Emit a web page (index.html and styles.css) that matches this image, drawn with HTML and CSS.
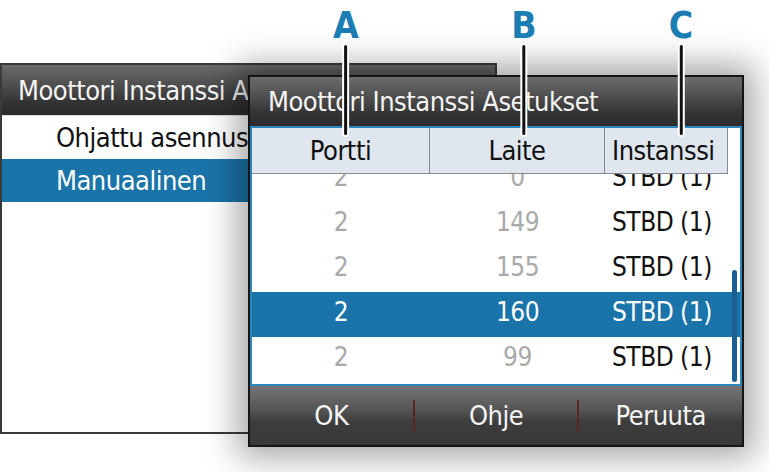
FILE: index.html
```
<!DOCTYPE html>
<html>
<head>
    <title>Moottori Instanssi Asetukset</title>
    <link rel="stylesheet" href="styles.css">
</head>
<body>
    <div class="desk">
        <div class="window back">
            <div class="titlebar">Moottori Instanssi Asetukset</div>
            <ul class="menu">
                <li>Ohjattu asennus</li>
                <li class="selected">Manuaalinen</li>
            </ul>
        </div>

        <div class="window dialog">
            <div class="titlebar">Moottori Instanssi Asetukset</div>
            <div class="table">
                <div class="thead">
                    <div class="cell">Portti</div>
                    <div class="cell">Laite</div>
                    <div class="cell">Instanssi</div>
                </div>
                <div class="tbody">
                    <div class="rows">
                        <div class="row"><span>2</span><span>0</span><span>STBD (1)</span></div>
                        <div class="row"><span>2</span><span>149</span><span>STBD (1)</span></div>
                        <div class="row"><span>2</span><span>155</span><span>STBD (1)</span></div>
                        <div class="row selected"><span>2</span><span>160</span><span>STBD (1)</span></div>
                        <div class="row"><span>2</span><span>99</span><span>STBD (1)</span></div>
                    </div>
                    <div class="scrollbar"></div>
                </div>
            </div>
            <div class="buttons">
                <div class="btn">OK</div>
                <div class="btn">Ohje</div>
                <div class="btn">Peruuta</div>
            </div>
        </div>

        <!-- callouts -->
        <div class="marker marker-a"><span>A</span><div class="line"></div></div>
        <div class="marker marker-b"><span>B</span><div class="line"></div></div>
        <div class="marker marker-c"><span>C</span><div class="line"></div></div>
    </div>
</body>
</html>
```

FILE: styles.css
```
body {
    margin: 0;
    background-color: #ffffff;
    font-family: "DejaVu Sans Condensed", "Liberation Sans", sans-serif;
    overflow: hidden;
}

.desk {
    position: relative;
    width: 769px;
    height: 472px;
}

.window {
    position: absolute;
    box-sizing: border-box;
    display: flex;
    flex-direction: column;
    overflow: hidden;
}

.titlebar {
    color: #f4f4f4;
    font-size: 27px;
    letter-spacing: -0.5px;
    white-space: nowrap;
    display: flex;
    align-items: center;
    background: linear-gradient(#6c6c6c, #4a4a4a 45%, #333333 75%, #2b2b2b);
}

/* back window */
.back {
    left: 0;
    top: 63px;
    width: 497px;
    height: 371px;
    background-color: #ffffff;
    border: 2px solid #3a3a3a;
}

.back .titlebar {
    height: 50px;
    padding-left: 16px;
    border-bottom: 1px solid #d8d8d8;
}

.menu {
    list-style: none;
    margin: 0;
    padding: 0;
}

.menu li {
    height: 43px;
    display: flex;
    align-items: center;
    padding-left: 54px;
    font-size: 27px;
    letter-spacing: -0.5px;
    color: #111111;
}

.menu li.selected {
    background-color: #1a74a9;
    color: #ffffff;
}

/* front dialog */
.dialog {
    left: 248px;
    top: 75px;
    width: 496px;
    height: 372px;
    border: 2px solid #151515;
    background-color: #2e2e2e;
    box-shadow: 0 0 32px 10px rgba(0, 0, 0, 0.36);
}

.dialog .titlebar {
    height: 49px;
    padding-left: 18px;
}

.table {
    border: 2px solid #2d86bb;
    background-color: #ffffff;
    height: 256px;
    display: flex;
    flex-direction: column;
}

.thead {
    width: 476px;
    height: 46px;
    box-sizing: border-box;
    display: grid;
    grid-template-columns: 178px 175px 1fr;
    background-color: #dfe6ee;
    border-bottom: 1px solid #868b92;
    border-right: 1px solid #868b92;
}

.cell {
    display: flex;
    align-items: center;
    justify-content: center;
    font-size: 27px;
    letter-spacing: -0.5px;
    color: #111111;
    border-right: 1px solid #868b92;
}

.cell:last-child {
    border-right: none;
    justify-content: flex-start;
    padding-left: 7px;
}

.tbody {
    position: relative;
    flex: 1;
    overflow: hidden;
}

.rows {
    margin-top: -17px;
}

.row {
    height: 45px;
    box-sizing: border-box;
    padding-bottom: 5px;
    display: grid;
    grid-template-columns: 178px 175px 1fr;
    align-items: center;
    font-size: 26px;
    letter-spacing: -0.5px;
    color: #a9a9a9;
}

.row span {
    text-align: center;
}

.row span:last-child {
    text-align: left;
    padding-left: 7px;
    color: #111111;
}

.row.selected {
    background-color: #1a74a9;
    color: #ffffff;
}

.row.selected span:last-child {
    color: #ffffff;
}

.scrollbar {
    position: absolute;
    right: 3px;
    top: 96px;
    width: 5px;
    height: 112px;
    border-radius: 3px;
    background-color: #1c5f90;
}

.buttons {
    flex: 1;
    display: flex;
    align-items: center;
    background: linear-gradient(#747474, #555555 40%, #3d3d3d 60%, #383838);
}

.btn {
    flex: 1;
    text-align: center;
    font-size: 27px;
    letter-spacing: -0.5px;
    color: #f4f4f4;
    border-left: 2px solid #5e2424;
    line-height: 32px;
}

.btn:first-child {
    border-left: none;
}

/* A / B / C callouts */
.marker {
    position: absolute;
    top: 7px;
    display: flex;
    flex-direction: column;
    align-items: center;
    transform: translateX(-50%);
}

.marker span {
    font-size: 37px;
    line-height: 37px;
    font-weight: bold;
    color: #1a7db3;
}

.marker .line {
    width: 3px;
    height: 90px;
    margin-top: 1px;
    border-radius: 2px;
    background-color: #111111;
    box-shadow: 0 0 0 2px #ffffff;
}

.marker-a {
    left: 346px;
}

.marker-b {
    left: 524px;
}

.marker-c {
    left: 681px;
}
```
